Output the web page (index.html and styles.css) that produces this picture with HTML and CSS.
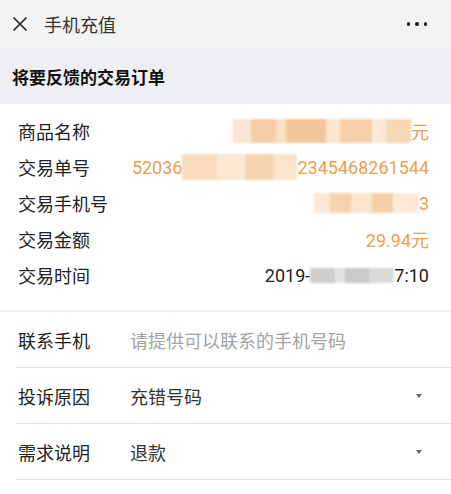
FILE: index.html
```html
<!DOCTYPE html>
<html lang="zh-CN">
<head>
<meta charset="utf-8">
<title>手机充值</title>
<link rel="stylesheet" href="styles.css">
</head>
<body>
<header class="topbar">
  <svg class="close" width="16" height="16" viewBox="0 0 16 16"><path d="M1.5 1.5 L14.5 14.5 M14.5 1.5 L1.5 14.5" stroke="#222" stroke-width="1.6" fill="none"/></svg>
  <span class="title">手机充值</span>
  <span class="more"><i></i><i></i><i></i></span>
</header>
<div class="section-title">将要反馈的交易订单</div>
<section class="order">
  <div class="row"><span class="label">商品名称</span><span class="value orange"><span class="mosaic m1"></span>元</span></div>
  <div class="row"><span class="label">交易单号</span><span class="value orange">52036<span class="mosaic m2"></span>2345468261544</span></div>
  <div class="row"><span class="label">交易手机号</span><span class="value orange"><span class="mosaic m3"></span>3</span></div>
  <div class="row"><span class="label">交易金额</span><span class="value orange">29.94元</span></div>
  <div class="row"><span class="label">交易时间</span><span class="value">2019-<span class="mosaic m4"></span>7:10</span></div>
</section>
<section class="form">
  <div class="field"><span class="label">联系手机</span><span class="input placeholder">请提供可以联系的手机号码</span></div>
  <div class="field"><span class="label">投诉原因</span><span class="input">充错号码</span><span class="caret"></span></div>
  <div class="field"><span class="label">需求说明</span><span class="input">退款</span><span class="caret"></span></div>
</section>
</body>
</html>
```
FILE: styles.css
```css
html, body {
  margin: 0;
  padding: 0;
  background: #fff;
  font-family: "Roboto", "Noto Sans CJK SC", sans-serif;
  color: #222;
}
.topbar {
  height: 48px;
  background: #f2f3f3;
  display: flex;
  align-items: center;
  padding: 0 24px 0 12px;
  box-sizing: border-box;
}
.close { flex: none; margin-top: -1px; }
.title {
  margin-left: 16px;
  font-size: 18px;
  color: #333;
  flex: 1;
}
.more { display: flex; gap: 5px; }
.more i {
  display: block;
  width: 3.5px;
  height: 3.5px;
  border-radius: 50%;
  background: #222;
}
.section-title {
  height: 56px;
  background: #efeff3;
  display: flex;
  align-items: center;
  padding-left: 12px;
  font-size: 17px;
  font-weight: bold;
  color: #111;
}
.order {
  padding: 9px 22px 17px 18px;
  border-bottom: 2px solid #ececec;
}
.row {
  height: 36px;
  display: flex;
  align-items: center;
  justify-content: space-between;
  font-size: 18px;
}
.value { display: flex; align-items: center; white-space: nowrap; }
.orange { color: #e9a04f; }
.mosaic { display: inline-block; height: 24px; filter: blur(1px); }
.m1 {
  width: 178px;
  background: linear-gradient(90deg, #fbe7d3 0 10%, #f5cda7 10% 24%, #fae0c5 24% 30%, #f3c69a 30% 52%, #fbe5cf 52% 60%, #f6d0ab 60% 78%, #fde9d6 78% 86%, #f7d6b4 86% 100%);
}
.m2 {
  width: 115px;
  height: 26px;
  background: linear-gradient(90deg, #f8dbbd 0 30%, #fbe7d2 30% 55%, #f7d5b3 55% 80%, #fbe4cc 80% 100%);
}
.m3 {
  width: 105px;
  height: 20px;
  background: linear-gradient(90deg, #fbe8d5 0 15%, #f6d3b0 15% 35%, #fbe4cc 35% 55%, #f5cfa9 55% 75%, #fce9d7 75% 100%);
}
.m4 {
  width: 84px;
  height: 15px;
  background: linear-gradient(90deg, #cfcfcf 0 30%, #e2e2e2 30% 42%, #c9c9c9 42% 70%, #dadada 70% 100%);
}
.field {
  height: 55px;
  margin-left: 16px;
  border-bottom: 1px solid #e5e5e5;
  display: flex;
  align-items: center;
  font-size: 18px;
  padding-right: 29px;
}
.field .label { width: 112px; margin-left: 2px; color: #222; }
.input { flex: 1; color: #333; }
.placeholder { color: #a3a3a3; }
.caret {
  width: 0;
  height: 0;
  border-left: 3.5px solid transparent;
  border-right: 3.5px solid transparent;
  border-top: 4px solid #666;
}
```
